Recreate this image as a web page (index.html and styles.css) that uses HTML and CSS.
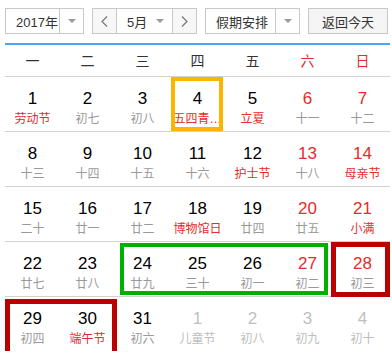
FILE: index.html
```html
<!DOCTYPE html>
<html lang="zh-CN">
<head>
<meta charset="utf-8">
<title>万年历</title>
<link rel="stylesheet" href="styles.css">
</head>
<body>
<div class="cal">
  <div class="toolbar">
    <div class="select year">
      <span class="sel-text">2017年</span>
      <span class="sel-arrow"><i class="tri"></i></span>
    </div>
    <div class="month-group">
      <button class="nav"><svg width="7" height="11" viewBox="0 0 7 11"><polyline points="6,0.5 1,5.5 6,10.5" fill="none" stroke="#777" stroke-width="1.2"/></svg></button>
      <div class="month-mid"><span>5月</span><i class="tri"></i></div>
      <button class="nav"><svg width="7" height="11" viewBox="0 0 7 11"><polyline points="1,0.5 6,5.5 1,10.5" fill="none" stroke="#777" stroke-width="1.2"/></svg></button>
    </div>
    <div class="select holiday">
      <span class="sel-text">假期安排</span>
      <span class="sel-arrow"><i class="tri"></i></span>
    </div>
    <button class="today-btn">返回今天</button>
  </div>

  <div class="weekdays">
    <span>一</span><span>二</span><span>三</span><span>四</span><span>五</span><span class="we">六</span><span class="we">日</span>
  </div>

  <div class="board">
    <div class="days">
      <div class="cell"><span class="num">1</span><span class="lunar fest">劳动节</span></div>
      <div class="cell"><span class="num">2</span><span class="lunar">初七</span></div>
      <div class="cell"><span class="num">3</span><span class="lunar">初八</span></div>
      <div class="cell"><span class="num">4</span><span class="lunar fest" title="五四青年节">五四青…</span></div>
      <div class="cell"><span class="num">5</span><span class="lunar fest">立夏</span></div>
      <div class="cell wknd"><span class="num">6</span><span class="lunar">十一</span></div>
      <div class="cell wknd"><span class="num">7</span><span class="lunar">十二</span></div>

      <div class="cell"><span class="num">8</span><span class="lunar">十三</span></div>
      <div class="cell"><span class="num">9</span><span class="lunar">十四</span></div>
      <div class="cell"><span class="num">10</span><span class="lunar">十五</span></div>
      <div class="cell"><span class="num">11</span><span class="lunar">十六</span></div>
      <div class="cell"><span class="num">12</span><span class="lunar fest">护士节</span></div>
      <div class="cell wknd"><span class="num">13</span><span class="lunar">十八</span></div>
      <div class="cell wknd"><span class="num">14</span><span class="lunar fest">母亲节</span></div>

      <div class="cell"><span class="num">15</span><span class="lunar">二十</span></div>
      <div class="cell"><span class="num">16</span><span class="lunar">廿一</span></div>
      <div class="cell"><span class="num">17</span><span class="lunar">廿二</span></div>
      <div class="cell"><span class="num">18</span><span class="lunar fest">博物馆日</span></div>
      <div class="cell"><span class="num">19</span><span class="lunar">廿四</span></div>
      <div class="cell wknd"><span class="num">20</span><span class="lunar">廿五</span></div>
      <div class="cell wknd"><span class="num">21</span><span class="lunar fest">小满</span></div>

      <div class="cell"><span class="num">22</span><span class="lunar">廿七</span></div>
      <div class="cell"><span class="num">23</span><span class="lunar">廿八</span></div>
      <div class="cell"><span class="num">24</span><span class="lunar">廿九</span></div>
      <div class="cell"><span class="num">25</span><span class="lunar">三十</span></div>
      <div class="cell"><span class="num">26</span><span class="lunar">初一</span></div>
      <div class="cell wknd"><span class="num">27</span><span class="lunar">初二</span></div>
      <div class="cell wknd"><span class="num">28</span><span class="lunar">初三</span></div>

      <div class="cell"><span class="num">29</span><span class="lunar">初四</span></div>
      <div class="cell"><span class="num">30</span><span class="lunar fest">端午节</span></div>
      <div class="cell"><span class="num">31</span><span class="lunar">初六</span></div>
      <div class="cell other"><span class="num">1</span><span class="lunar">儿童节</span></div>
      <div class="cell other"><span class="num">2</span><span class="lunar">初八</span></div>
      <div class="cell other"><span class="num">3</span><span class="lunar">初九</span></div>
      <div class="cell other"><span class="num">4</span><span class="lunar">初十</span></div>
    </div>
    <div class="marks">
      <div class="mark mark-today"></div>
      <div class="mark mark-work"></div>
      <div class="mark mark-rest1"></div>
      <div class="mark mark-rest2"></div>
    </div>
  </div>
</div>
</body>
</html>
```

FILE: styles.css
```css
* { box-sizing: border-box; }

html, body {
  margin: 0;
  padding: 0;
  background: #fff;
}

body {
  font-family: "Liberation Sans", "Noto Sans CJK SC", sans-serif;
  color: #333;
}

.cal {
  width: 385px;
  margin-left: 5px;
  padding-top: 8px;
}

/* toolbar */
.toolbar {
  display: flex;
  gap: 8px;
  height: 26px;
  font-size: 13px;
}

.select,
.month-group {
  display: flex;
  border: 1px solid #c8c8c8;
  background: #fff;
}

.year { width: 79px; }
.holiday { width: 95px; }

.sel-text {
  flex: 1;
  display: flex;
  align-items: center;
  padding-left: 10px;
  color: #333;
}

.sel-arrow {
  width: 24px;
  border-left: 1px solid #c8c8c8;
  display: flex;
  align-items: center;
  justify-content: center;
}

.tri {
  display: block;
  width: 0;
  height: 0;
  border-left: 4px solid transparent;
  border-right: 4px solid transparent;
  border-top: 4px solid #999;
}

.month-group { width: 105px; }

.nav {
  width: 23px;
  margin: 0;
  padding: 0;
  border: 0;
  background: #f7f7f7;
  display: flex;
  align-items: center;
  justify-content: center;
}

.month-mid {
  flex: 1;
  display: flex;
  align-items: center;
  justify-content: space-between;
  padding: 0 8px 0 10px;
  border-left: 1px solid #c8c8c8;
  border-right: 1px solid #c8c8c8;
}

.today-btn {
  width: 80px;
  margin: 0;
  padding: 0;
  border: 1px solid #c8c8c8;
  background: #f5f5f5;
  font: inherit;
  font-size: 13px;
  color: #333;
}

/* weekday header */
.weekdays {
  margin-top: 9px;
  border-top: 2px solid #4ea5f2;
  display: grid;
  grid-template-columns: repeat(7, 55px);
  height: 33px;
  line-height: 33px;
  font-size: 14px;
  text-align: center;
  color: #333;
}

.weekdays .we { color: #e52b2b; }

/* calendar board */
.board {
  display: grid;
}

.days,
.marks {
  grid-area: 1 / 1;
  display: grid;
  grid-template-columns: repeat(7, 55px);
  grid-template-rows: repeat(5, 55px);
}

.cell {
  border-top: 1px solid #d2d2d2;
  padding-top: 12px;
  text-align: center;
}

.num {
  display: block;
  height: 20px;
  line-height: 20px;
  font-size: 17px;
  color: #000;
}

.lunar {
  display: block;
  margin-top: 1px;
  line-height: 18px;
  font-size: 12px;
  color: #999;
  white-space: nowrap;
}

.lunar.fest { color: #e52b2b; }
.wknd .num { color: #e52b2b; }

.other .num { color: #bfbfbf; }
.other .lunar { color: #bdbdbd; }

/* highlight overlays */
.marks {
  pointer-events: none;
  z-index: 1;
}

.mark { border-style: solid; }

.mark-today {
  grid-row: 1;
  grid-column: 4;
  margin: 1px 2px 0 1px;
  border-width: 4px;
  border-color: #fbb500;
}

.mark-work {
  grid-row: 4;
  grid-column: 3 / 7;
  margin: 2px 7px 1px 5px;
  border-width: 4px;
  border-color: #00b000;
}

.mark-rest1 {
  grid-row: 4;
  grid-column: 7;
  margin: 1px 0 -1px -4px;
  border-width: 5px;
  border-color: #bb0000;
}

.mark-rest2 {
  grid-row: 5;
  grid-column: 1 / 3;
  margin: 3px -2px -5px 0;
  border-width: 5px;
  border-color: #bb0000;
}
```
